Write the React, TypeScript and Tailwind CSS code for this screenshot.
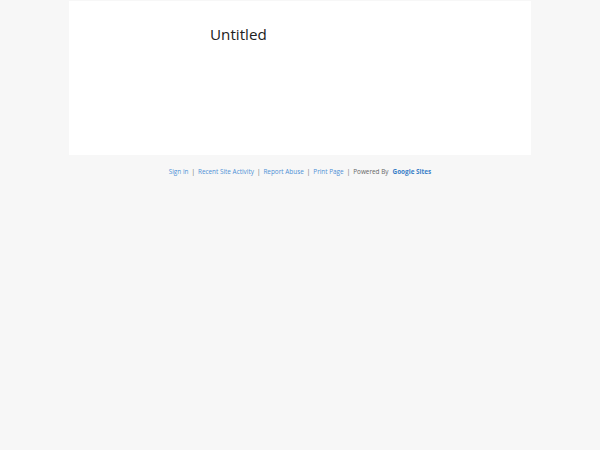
import React from "react";

const links = ["Sign in", "Recent Site Activity", "Report Abuse", "Print Page"];

export default function App() {
  return (
    <div
      className="min-h-[450px] w-full bg-[#f7f7f7] pt-px"
      style={{ fontFamily: '"Open Sans", sans-serif' }}
    >
      <div className="mx-auto h-[154px] w-[462px] bg-white pl-[141px] pt-[22px]">
        <h1 className="text-[15.2px] leading-[22px] text-[#212121]">Untitled</h1>
      </div>
      <div className="mt-[11px] flex justify-center text-[6.4px] leading-[12px] text-[#666]">
        {links.map((l) => (
          <span key={l} className="flex">
            <a className="text-[#4d90d6]">{l}</a>
            <span className="mx-[3px]">|</span>
          </span>
        ))}
        <span>Powered By</span>
        <a className="ml-[4px] font-bold text-[#3a7fc8]">Google Sites</a>
      </div>
    </div>
  );
}
